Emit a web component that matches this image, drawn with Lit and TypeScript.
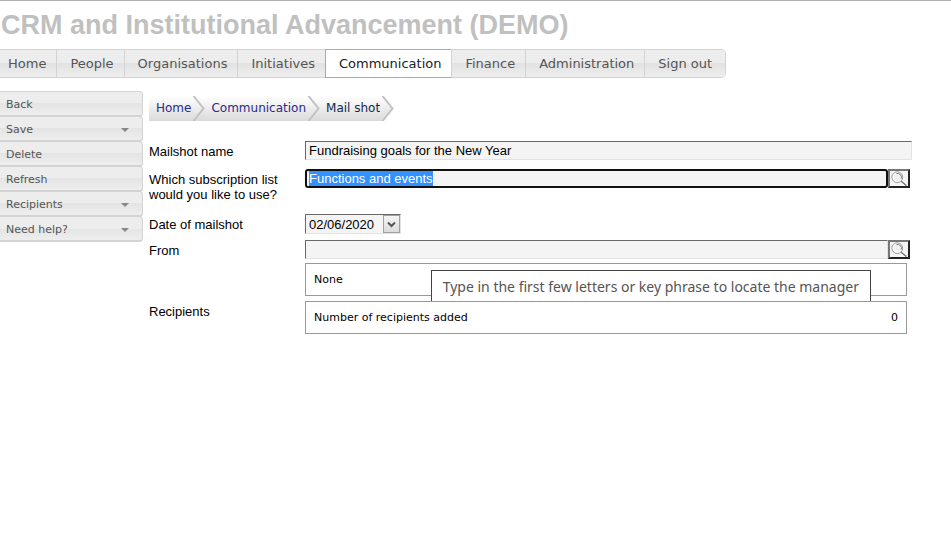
import { LitElement, html, css, svg, nothing } from "lit";
import { customElement, query } from "lit/decorators.js";
import { classMap } from "lit/directives/class-map.js";

const sections = [
  "Home",
  "People",
  "Organisations",
  "Initiatives",
  "Communication",
  "Finance",
  "Administration",
  "Sign out",
];

const actions = [
  { label: "Back", menu: false },
  { label: "Save", menu: true },
  { label: "Delete", menu: false },
  { label: "Refresh", menu: false },
  { label: "Recipients", menu: true },
  { label: "Need help?", menu: true },
];

const trail = ["Home", "Communication", "Mail shot"];

const magnifier = html`<svg class="glass" viewBox="0 0 18 15" width="18" height="15" aria-hidden="true">
  ${svg`
    <path d="M11.5 10.5 L16 14.5" stroke="#fff" stroke-width="4" />
    <circle cx="7.3" cy="6.2" r="5.4" fill="#fff" stroke="#999" stroke-width="1" />
    <circle cx="7.6" cy="6.2" r="3.6" fill="#f0f0f0" />
    <path d="M6.5 2.6 A3.8 3.8 0 0 1 11.2 7.6" fill="none" stroke="#777" stroke-width="1" />
    <path d="M11.2 10.2 L16.4 14.6" stroke="#777" stroke-width="1.5" />
  `}
</svg>`;

@customElement("app-root")
export class AppRoot extends LitElement {
  static styles = css`
    :host {
      display: block;
      border-top: 1px solid #b0b0b0;
      background: #fff;
      color: #000;
      font: 13px/15px "Liberation Sans", Arial, sans-serif;
    }
    * {
      box-sizing: border-box;
    }
    .title {
      margin: 0;
      padding: 8px 0 0 1px;
      height: 48px;
      font-size: 27px;
      line-height: 32px;
      color: #c0c0c0;
      white-space: nowrap;
    }
    .nav {
      display: flex;
      width: max-content;
      border: 1px solid #d3d3d3;
      border-left: 0;
      border-radius: 0 5px 5px 0;
    }
    .tab {
      padding: 0 10px 0 13px;
      border-left: 1px solid #d3d3d3;
      background: linear-gradient(#ededed 50%, #e2e2e2 50%, #eeeeee);
      color: #555;
      font: 13px/27px "DejaVu Sans", Verdana, sans-serif;
      text-decoration: none;
    }
    .tab:first-child {
      padding-left: 8px;
      border-left: 0;
    }
    .tab:last-child {
      padding-right: 13px;
      border-radius: 0 4px 4px 0;
    }
    .tab.active {
      border-left-color: #aaa;
      background: #fff;
      box-shadow: 0 -1px #aaa, 0 1px #aaa;
      color: #212121;
    }
    .body {
      display: grid;
      grid-template-columns: 143px minmax(0, 1fr);
      column-gap: 6px;
      align-items: start;
      padding: 13px 39px 0 0;
    }
    .side {
      display: flex;
      flex-direction: column;
    }
    .action {
      display: flex;
      align-items: center;
      justify-content: space-between;
      height: 26px;
      margin: 0 0 -1px;
      padding: 3px 13px 0 6px;
      border: 1px solid #d3d3d3;
      border-left: 0;
      border-bottom-width: 2px;
      border-radius: 0 4px 4px 0;
      background: linear-gradient(#ededed 50%, #e4e4e4 50%, #eeeeee);
      color: #555;
      font: 11px/16px "DejaVu Sans", Verdana, sans-serif;
    }
    .caret {
      border: 4px solid transparent;
      border-top-color: #888;
      border-bottom: 0;
    }
    .trail {
      display: flex;
      width: max-content;
      height: 25px;
      margin: 5px 0 20px;
      padding: 0;
      list-style: none;
      font: 12px/25px "DejaVu Sans", Verdana, sans-serif;
    }
    .crumb {
      display: flex;
      padding-left: 6px;
      background: linear-gradient(#fff, #dadada);
    }
    .crumb:first-child {
      padding-left: 7px;
    }
    .crumb:last-child {
      background: linear-gradient(#fff, #dadada) 0 0 / calc(100% - 14px) 100% no-repeat;
    }
    .crumb a {
      color: #2a2a8c;
      text-decoration: none;
    }
    .crumb:last-child a {
      color: #14284e;
    }
    .chevron {
      display: block;
    }
    .row {
      display: grid;
      grid-template-columns: 156px minmax(0, 1fr);
      align-items: start;
      padding-bottom: 9px;
    }
    .row.tight {
      padding-bottom: 6px;
    }
    .row.loose {
      padding-bottom: 12px;
    }
    .row.close {
      padding-bottom: 5px;
    }
    .label {
      padding-top: 3px;
      padding-right: 16px;
    }
    .line {
      display: flex;
      margin-right: 2px;
    }
    .text {
      flex: 1;
      width: 100%;
      min-width: 0;
      height: 19px;
      margin: 0;
      padding: 0 3px;
      border: 1px solid #e3e3e3;
      border-top-color: #696969;
      border-left-color: #696969;
      border-radius: 0;
      background: #f4f4f4;
      color: #000;
      font: 13px/15px "Liberation Sans", Arial, sans-serif;
      outline: 0;
    }
    .text.current {
      padding: 0 2px;
      border: 2px solid #101010;
      border-radius: 3px;
    }
    .text::selection {
      background: #3390ff;
      color: #fff;
    }
    .find {
      width: 22px;
      height: 19px;
      padding: 0;
      border: 2px solid #222;
      border-top-color: #767676;
      border-left-color: #767676;
      background: #f4f4f4;
    }
    .glass {
      display: block;
    }
    .date {
      display: flex;
      width: 96px;
      height: 20px;
      border: 1px solid #e3e3e3;
      border-top-color: #696969;
      border-left-color: #696969;
      background: #f4f4f4;
    }
    .date .text {
      height: 18px;
      border: 0;
    }
    .drop {
      display: grid;
      place-items: center;
      flex: none;
      width: 17px;
      height: 18px;
      padding: 0;
      border: 1px solid #a0a0a0;
      background: linear-gradient(#f4f4f4, #dcdcdc);
    }
    .panel {
      position: relative;
      display: flex;
      justify-content: space-between;
      margin-right: 5px;
      padding: 0 8px;
      border: 1px solid #999;
      background: #fff;
      font: 11px/31px "DejaVu Sans", Verdana, sans-serif;
    }
    .picked {
      margin-top: 4px;
    }
    .total {
      z-index: 2;
    }
    .tip {
      position: absolute;
      z-index: 1;
      top: 6px;
      right: 35px;
      padding: 0 11px;
      border: 1px solid #444;
      background: #fff;
      color: #555;
      font: 14px/31px "Noto Sans", "Open Sans", sans-serif;
      white-space: nowrap;
    }
  `;

  @query("#list") private listField!: HTMLInputElement;

  firstUpdated() {
    this.listField.focus();
    this.listField.select();
  }

  private renderCrumb(label: string) {
    return html`<li class="crumb">
      <a href="#">${label}</a>
      <svg class="chevron" width="14" height="25" viewBox="0 0 14 25" aria-hidden="true">
        ${svg`
          <defs><linearGradient id="fade" x2="0" y2="1"><stop stop-color="#fff" /><stop offset="1" stop-color="#dadada" /></linearGradient></defs>
          <path d="M0 0 L3 0 L13 12.5 L3 25 L0 25 Z" fill="url(#fade)" />
          <path d="M2.5 0 L12.5 12.5 L2.5 25" fill="none" stroke="#c2c2c2" stroke-width="2" />
        `}
      </svg>
    </li>`;
  }

  render() {
    return html`
      <h1 class="title">CRM and Institutional Advancement (DEMO)</h1>
      <nav class="nav">
        ${sections.map(
          (name) =>
            html`<a href="#" class=${classMap({ tab: true, active: name === "Communication" })}>${name}</a>`
        )}
      </nav>
      <div class="body">
        <aside class="side">
          ${actions.map(
            (a) =>
              html`<button class="action" type="button">
                ${a.label}${a.menu ? html`<span class="caret"></span>` : nothing}
              </button>`
          )}
        </aside>
        <main>
          <ol class="trail">
            ${trail.map((label) => this.renderCrumb(label))}
          </ol>
          <div class="row">
            <label class="label" for="name">Mailshot name</label>
            <input class="text" id="name" value="Fundraising goals for the New Year" />
          </div>
          <div class="row loose">
            <label class="label" for="list">Which subscription list would you like to use?</label>
            <div class="line">
              <input class="text current" id="list" value="Functions and events" />
              <button class="find" type="button" aria-label="Find list">${magnifier}</button>
            </div>
          </div>
          <div class="row tight">
            <label class="label" for="date">Date of mailshot</label>
            <div class="date">
              <input class="text" id="date" value="02/06/2020" />
              <button class="drop" type="button" aria-label="Pick date">
                <svg width="9" height="7" viewBox="0 0 9 7" aria-hidden="true">
                  <path d="M1 1.5 L4.5 5 L8 1.5" fill="none" stroke="#555" stroke-width="2" />
                </svg>
              </button>
            </div>
          </div>
          <div class="row close">
            <label class="label" for="from">From</label>
            <div>
              <div class="line">
                <input class="text" id="from" />
                <button class="find" type="button" aria-label="Find manager">${magnifier}</button>
              </div>
              <div class="panel picked">
                <span>None</span>
                <div class="tip" role="tooltip">
                  Type in the first few letters or key phrase to locate the manager
                </div>
              </div>
            </div>
          </div>
          <div class="row">
            <span class="label">Recipients</span>
            <div class="panel total">
              <span>Number of recipients added</span>
              <span>0</span>
            </div>
          </div>
        </main>
      </div>
    `;
  }
}
